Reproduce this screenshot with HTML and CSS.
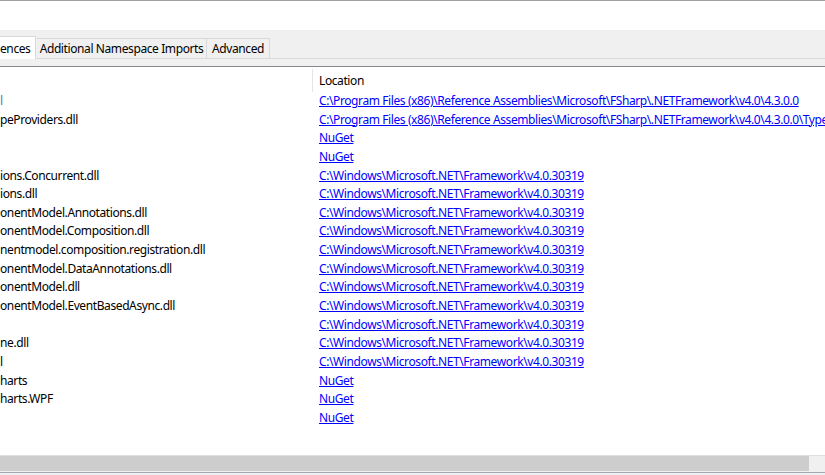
FILE: index.html
```html
<!DOCTYPE html>
<html>
<head>
<meta charset="utf-8">
<link rel="stylesheet" href="styles.css">
</head>
<body>
<div class="window">
  <div class="titlearea"></div>
  <div class="tabstrip">
    <div class="tab tab-selected">ences</div>
    <div class="tab tab-ns">Additional Namespace Imports</div>
    <div class="tab tab-adv">Advanced</div>
  </div>
  <div class="tabpage">
    <div class="listview">
      <div class="header">
        <div class="col-name"></div>
        <div class="col-loc hdr-loc">Location</div>
      </div>
      <div class="rows">
        <div class="row"><div class="col-name sel">l</div><div class="col-loc"><a class="link">C:\Program Files (x86)\Reference Assemblies\Microsoft\FSharp\.NETFramework\v4.0\4.3.0.0</a></div></div>
        <div class="row"><div class="col-name">peProviders.dll</div><div class="col-loc"><a class="link">C:\Program Files (x86)\Reference Assemblies\Microsoft\FSharp\.NETFramework\v4.0\4.3.0.0\TypeProviders</a></div></div>
        <div class="row"><div class="col-name"></div><div class="col-loc"><a class="link">NuGet</a></div></div>
        <div class="row"><div class="col-name"></div><div class="col-loc"><a class="link">NuGet</a></div></div>
        <div class="row"><div class="col-name">ions.Concurrent.dll</div><div class="col-loc"><a class="link">C:\Windows\Microsoft.NET\Framework\v4.0.30319</a></div></div>
        <div class="row"><div class="col-name">ions.dll</div><div class="col-loc"><a class="link">C:\Windows\Microsoft.NET\Framework\v4.0.30319</a></div></div>
        <div class="row"><div class="col-name">onentModel.Annotations.dll</div><div class="col-loc"><a class="link">C:\Windows\Microsoft.NET\Framework\v4.0.30319</a></div></div>
        <div class="row"><div class="col-name">onentModel.Composition.dll</div><div class="col-loc"><a class="link">C:\Windows\Microsoft.NET\Framework\v4.0.30319</a></div></div>
        <div class="row"><div class="col-name">nentmodel.composition.registration.dll</div><div class="col-loc"><a class="link">C:\Windows\Microsoft.NET\Framework\v4.0.30319</a></div></div>
        <div class="row"><div class="col-name">onentModel.DataAnnotations.dll</div><div class="col-loc"><a class="link">C:\Windows\Microsoft.NET\Framework\v4.0.30319</a></div></div>
        <div class="row"><div class="col-name">onentModel.dll</div><div class="col-loc"><a class="link">C:\Windows\Microsoft.NET\Framework\v4.0.30319</a></div></div>
        <div class="row"><div class="col-name">onentModel.EventBasedAsync.dll</div><div class="col-loc"><a class="link">C:\Windows\Microsoft.NET\Framework\v4.0.30319</a></div></div>
        <div class="row"><div class="col-name"></div><div class="col-loc"><a class="link">C:\Windows\Microsoft.NET\Framework\v4.0.30319</a></div></div>
        <div class="row"><div class="col-name">ne.dll</div><div class="col-loc"><a class="link">C:\Windows\Microsoft.NET\Framework\v4.0.30319</a></div></div>
        <div class="row"><div class="col-name">l</div><div class="col-loc"><a class="link">C:\Windows\Microsoft.NET\Framework\v4.0.30319</a></div></div>
        <div class="row"><div class="col-name">harts</div><div class="col-loc"><a class="link">NuGet</a></div></div>
        <div class="row"><div class="col-name">harts.WPF</div><div class="col-loc"><a class="link">NuGet</a></div></div>
        <div class="row"><div class="col-name"></div><div class="col-loc"><a class="link">NuGet</a></div></div>
      </div>
      <div class="scrollbar">
        <div class="thumb"></div>
        <div class="track-end"></div>
      </div>
    </div>
  </div>
</div>
</body>
</html>
```

FILE: styles.css
```css
html, body {
  margin: 0;
  padding: 0;
  background: #ffffff;
}
body {
  width: 825px;
  height: 475px;
  overflow: hidden;
  font-family: "Noto Sans", "Open Sans", sans-serif;
  font-size: 12px;
  letter-spacing: -0.4px;
  color: #000000;
}
.window {
  border-top: 1px solid #a0a0a0;
  height: 474px;
  display: flex;
  flex-direction: column;
}
.titlearea {
  height: 29px;
  background: #ffffff;
}
.tabstrip {
  height: 28px;
  background: #f0f0f0;
  display: flex;
  align-items: flex-end;
  border-bottom: 1px solid #d9d9d9;
}
.tab {
  height: 19px;
  line-height: 19px;
  border: 1px solid #d9d9d9;
  border-bottom: none;
  background: #f0f0f0;
  white-space: nowrap;
  text-align: center;
  box-sizing: content-box;
}
.tab-selected {
  width: 28px;
  height: 22px;
  line-height: 24px;
  padding-right: 7px;
  border-left: none;
  background: #ffffff;
  margin-bottom: -1px;
  text-align: right;
  overflow: hidden;
}
.tab-ns {
  width: 169px;
  border-left: none;
  margin-left: 1px;
}
.tab-adv {
  width: 62px;
  border-left: none;
}
.tabpage {
  flex: 1;
  background: #f0f0f0;
  padding-top: 7px;
  display: flex;
  flex-direction: column;
}
.listview {
  flex: 1;
  background: #ffffff;
  border-top: 1px solid #828790;
  border-bottom: 1px solid #a3a8b6;
  margin-bottom: 2px;
  display: flex;
  flex-direction: column;
  overflow: hidden;
}
.header {
  height: 25px;
  display: flex;
  align-items: center;
  flex: none;
}
.header .col-name {
  height: 23px;
  border-right: 1px solid #e5e5e5;
  align-self: flex-start;
  margin-top: 2px;
  width: 312px;
}
.hdr-loc {
  padding-left: 6px;
  padding-top: 1px;
}
.rows {
  flex: 1;
}
.row {
  height: 18.65px;
  line-height: 18.65px;
  display: flex;
  white-space: nowrap;
}
.col-name {
  width: 313px;
  flex: none;
  overflow: hidden;
}
.col-loc {
  padding-left: 6px;
  white-space: nowrap;
}
.sel {
  color: #3c7fd1;
}
.link {
  color: #0000ff;
  text-decoration: underline;
}
.scrollbar {
  flex: none;
  height: 15px;
  border-top: 1px solid #dedede;
  border-bottom: 1px solid #f0f0f0;
  background: #f0f0f0;
  display: flex;
}
.thumb {
  width: 809px;
  background: #cdcdcd;
}
.track-end {
  flex: 1;
}
```
